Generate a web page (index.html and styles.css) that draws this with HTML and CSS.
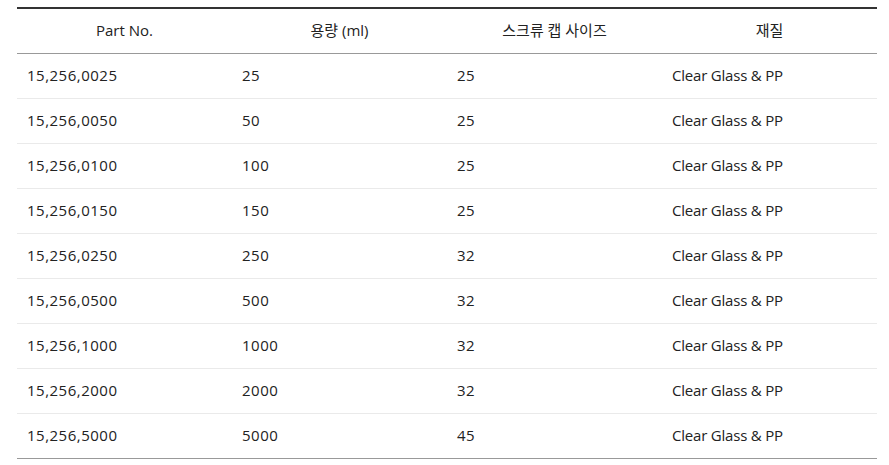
FILE: index.html
```html
<!DOCTYPE html>
<html lang="ko">
<head>
<meta charset="utf-8">
<link rel="stylesheet" href="styles.css">
</head>
<body>
<div class="wrap">
<table class="spec">
  <thead>
    <tr><th>Part No.</th><th>용량 (ml)</th><th>스크류 캡 사이즈</th><th>재질</th></tr>
  </thead>
  <tbody>
    <tr><td>15,256,0025</td><td>25</td><td>25</td><td class="txt">Clear Glass &amp; PP</td></tr>
    <tr><td>15,256,0050</td><td>50</td><td>25</td><td class="txt">Clear Glass &amp; PP</td></tr>
    <tr><td>15,256,0100</td><td>100</td><td>25</td><td class="txt">Clear Glass &amp; PP</td></tr>
    <tr><td>15,256,0150</td><td>150</td><td>25</td><td class="txt">Clear Glass &amp; PP</td></tr>
    <tr><td>15,256,0250</td><td>250</td><td>32</td><td class="txt">Clear Glass &amp; PP</td></tr>
    <tr><td>15,256,0500</td><td>500</td><td>32</td><td class="txt">Clear Glass &amp; PP</td></tr>
    <tr><td>15,256,1000</td><td>1000</td><td>32</td><td class="txt">Clear Glass &amp; PP</td></tr>
    <tr><td>15,256,2000</td><td>2000</td><td>32</td><td class="txt">Clear Glass &amp; PP</td></tr>
    <tr><td>15,256,5000</td><td>5000</td><td>45</td><td class="txt">Clear Glass &amp; PP</td></tr>
  </tbody>
</table>
</div>
</body>
</html>
```
FILE: styles.css
```css
html, body { margin: 0; padding: 0; background: #fff; }
.wrap { padding: 7px 12px 0 17px; }
.spec {
  width: 860px;
  border-collapse: collapse;
  table-layout: fixed;
  font-family: "Open Sans", "Noto Sans CJK KR", sans-serif;
  font-size: 15px;
  color: #222;
  border-top: 2px solid #333;
  border-bottom: 1px solid #999;
}
.spec th, .spec td { width: 215px; box-sizing: border-box; }
.spec th {
  height: 45px;
  font-weight: normal;
  text-align: center;
  border-bottom: 1px solid #999;
  padding: 0 0 2px 0;
}
.spec td {
  height: 45px;
  text-align: left;
  padding: 0 0 2px 10px;
  letter-spacing: 0.5px;
  border-bottom: 1px solid #eaeaea;
}
.spec td.txt { letter-spacing: -0.2px; }
.spec tbody tr:last-child td { border-bottom: 1px solid #999; }
```
